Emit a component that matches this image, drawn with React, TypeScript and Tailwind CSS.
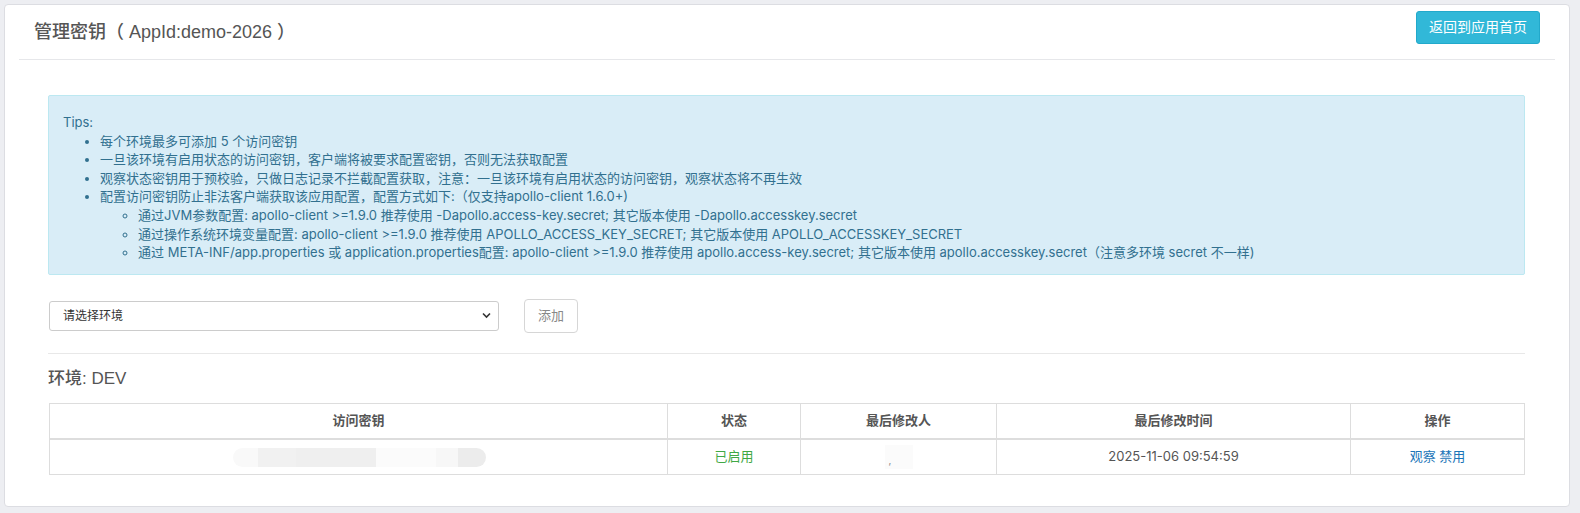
import React from 'react'

const font = { fontFamily: '"Liberation Sans", "Noto Sans CJK SC", sans-serif' }
const tipsFont = { fontFamily: 'Inter, "Noto Sans CJK SC", sans-serif' }

function Tips() {
  return (
    <div
      className="border border-[#bce8f1] bg-[#d9edf7] text-[#31708f] text-[13px] leading-[18.6px] pl-[14px] pr-4 pt-[17px] pb-[12px] rounded-[2px]"
      style={tipsFont}
    >
      <div>Tips:</div>
      <ul className="list-disc pl-[37px]">
        <li>每个环境最多可添加 5 个访问密钥</li>
        <li>一旦该环境有启用状态的访问密钥，客户端将被要求配置密钥，否则无法获取配置</li>
        <li>观察状态密钥用于预校验，只做日志记录不拦截配置获取，注意：一旦该环境有启用状态的访问密钥，观察状态将不再生效</li>
        <li>
          配置访问密钥防止非法客户端获取该应用配置，配置方式如下:（仅支持apollo-client 1.6.0+)
          <ul className="list-[circle] pl-[38px]">
            <li>通过JVM参数配置: apollo-client &gt;=1.9.0 推荐使用 -Dapollo.access-key.secret; 其它版本使用 -Dapollo.accesskey.secret</li>
            <li>通过操作系统环境变量配置: apollo-client &gt;=1.9.0 推荐使用 APOLLO_ACCESS_KEY_SECRET; 其它版本使用 APOLLO_ACCESSKEY_SECRET</li>
            <li>通过 META-INF/app.properties 或 application.properties配置: apollo-client &gt;=1.9.0 推荐使用 apollo.access-key.secret; 其它版本使用 apollo.accesskey.secret（注意多环境 secret 不一样)</li>
          </ul>
        </li>
      </ul>
    </div>
  )
}

function KeyTable() {
  const th = 'border border-[#ddd] border-b-2 font-semibold text-[#555] text-[13px] h-[36px] text-center align-middle'
  const td = 'border border-[#ddd] text-[13px] h-[35px] text-center align-middle'
  return (
    <table className="w-full border-collapse table-fixed" style={tipsFont}>
      <colgroup>
        <col className="w-[618px]" />
        <col className="w-[133px]" />
        <col className="w-[196px]" />
        <col className="w-[354px]" />
        <col />
      </colgroup>
      <thead>
        <tr>
          <th className={th}>访问密钥</th>
          <th className={th}>状态</th>
          <th className={th}>最后修改人</th>
          <th className={th}>最后修改时间</th>
          <th className={th}>操作</th>
        </tr>
      </thead>
      <tbody>
        <tr>
          <td className={td}>
            <div className="flex justify-start pl-[183px]">
              <div className="flex h-[19px] w-[253px] rounded-full overflow-hidden">
                <div className="w-[25px] bg-[#f9f9f9]" />
                <div className="w-[38px] bg-[#f1f1f1]" />
                <div className="w-[80px] bg-[#efefef]" />
                <div className="w-[60px] bg-[#fbfbfb]" />
                <div className="w-[22px] bg-[#f7f7f7]" />
                <div className="flex-1 bg-[#ececec]" />
              </div>
            </div>
          </td>
          <td className={td + ' text-[#3fa845]'}>已启用</td>
          <td className={td}>
            <div className="flex justify-center">
              <div className="relative h-[24px] w-[28px] bg-[#fbfbfb]">
                <span className="absolute left-[4px] top-[8px] text-[10px] text-[#888]">,</span>
              </div>
            </div>
          </td>
          <td className={td + ' text-[#555]'}>2025-11-06 09:54:59</td>
          <td className={td + ' text-[#1a75b8]'}>
            <span>观察</span> <span>禁用</span>
          </td>
        </tr>
      </tbody>
    </table>
  )
}

export default function App() {
  return (
    <div className="min-h-[513px] w-[1580px] bg-[#edeef2] pt-[4px] pl-[4px]" style={font}>
      <div className="w-[1566px] h-[503px] bg-white border border-[#dcdde2] rounded-[4px] px-[14px]">
        {/* header */}
        <div className="flex items-center justify-between h-[55px] border-b border-[#e6e7ea] pl-[15px] pr-[15px]">
          <h1 className="text-[18px] text-[#555] font-medium">管理密钥（ AppId:demo-2026 ）</h1>
          <button className="h-[33px] w-[124px] rounded-[3px] bg-[#31b8d8] border border-[#22a9cb] text-white text-[14px] mt-[-9px]">
            返回到应用首页
          </button>
        </div>

        {/* body */}
        <div className="pl-[29px] pr-[30px] pt-[35px]">
          <Tips />

          <div className="flex items-center mt-[24px]">
            <div className="relative w-[450px] h-[30px] ml-[1px]">
              <select className="appearance-none w-full h-full border border-[#ccc] rounded-[3px] bg-white pl-[13px] text-[12px] text-[#333]">
                <option>请选择环境</option>
              </select>
              <svg className="absolute right-[8px] top-[11px]" width="9" height="7" viewBox="0 0 9 7">
                <path d="M1 1.5 L4.5 5 L8 1.5" fill="none" stroke="#333" strokeWidth="1.6" />
              </svg>
            </div>
            <button className="ml-[25px] w-[54px] h-[34px] border border-[#d6d6d6] rounded-[4px] bg-white text-[13px] text-[#888]">
              添加
            </button>
          </div>

          <div className="border-t border-[#e8e8e8] mt-[20px]" />

          <div className="text-[17px] text-[#555] font-medium mt-[13px] leading-[24px]">环境: DEV</div>

          <div className="mt-[12px] pl-[1px]">
            <KeyTable />
          </div>
        </div>
      </div>
    </div>
  )
}
